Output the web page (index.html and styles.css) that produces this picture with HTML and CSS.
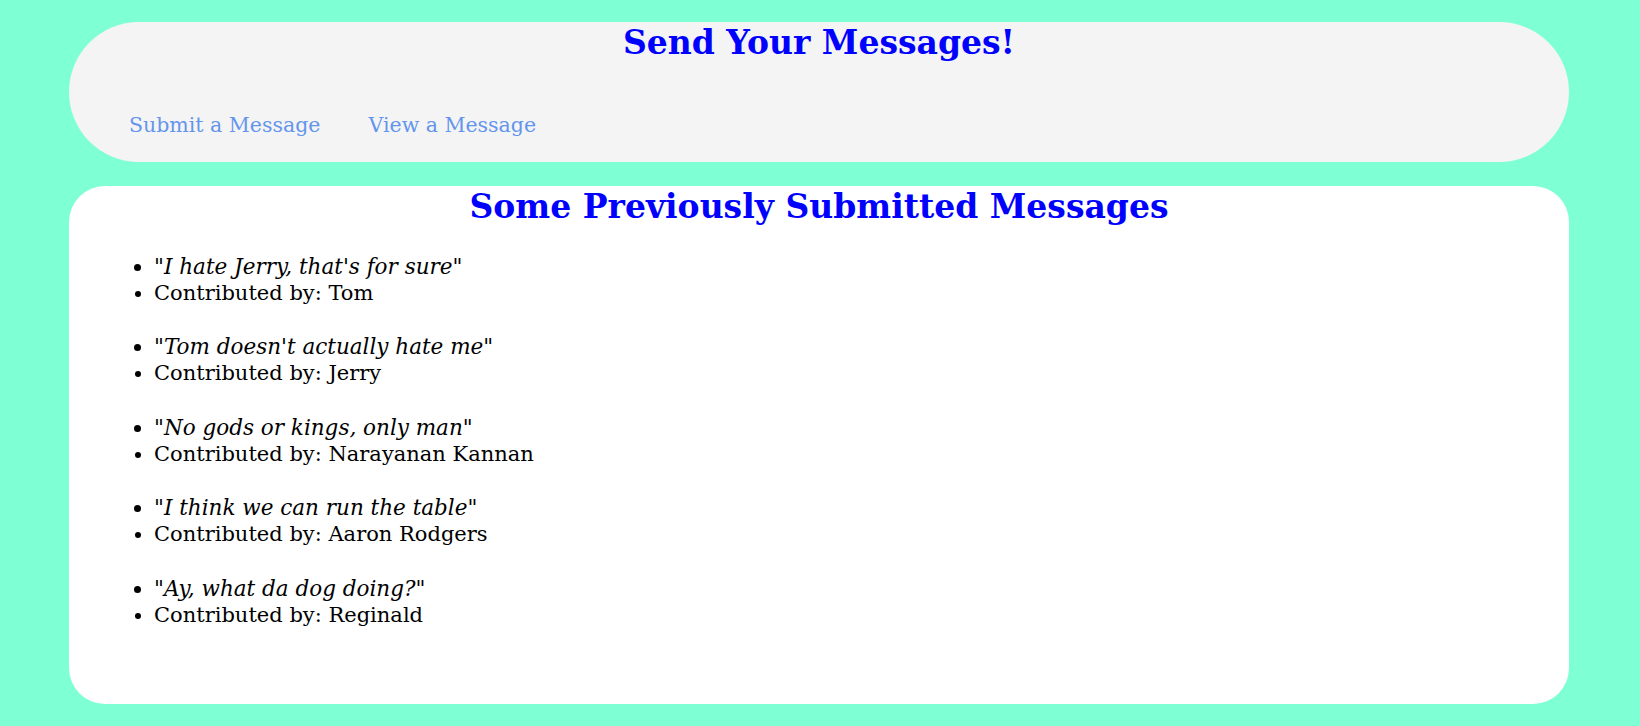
FILE: index.html
```html
<!DOCTYPE html>
<html lang="en">
<head>
<meta charset="utf-8">
<title>Send Your Messages!</title>
<link rel="stylesheet" href="styles.css">
</head>
<body>
<header class="top">
  <h1 class="title">Send Your Messages!</h1>
  <nav class="nav">
    <a class="nav-link" href="#">Submit a Message</a>
    <a class="nav-link" href="#">View a Message</a>
  </nav>
</header>
<main class="panel">
  <h1 class="title">Some Previously Submitted Messages</h1>
  <ul class="msg">
    <li class="quote">"I hate Jerry, that's for sure"</li>
    <li>Contributed by: Tom</li>
  </ul>
  <ul class="msg">
    <li class="quote">"Tom doesn't actually hate me"</li>
    <li>Contributed by: Jerry</li>
  </ul>
  <ul class="msg">
    <li class="quote">"No gods or kings, only man"</li>
    <li>Contributed by: Narayanan Kannan</li>
  </ul>
  <ul class="msg">
    <li class="quote">"I think we can run the table"</li>
    <li>Contributed by: Aaron Rodgers</li>
  </ul>
  <ul class="msg">
    <li class="quote">"Ay, what da dog doing?"</li>
    <li>Contributed by: Reginald</li>
  </ul>
</main>
</body>
</html>
```

FILE: styles.css
```css
html, body {
  margin: 0;
  padding: 0;
}
body {
  background: #7fffd4;
  font-family: "DejaVu Serif", "Liberation Serif", serif;
  padding: 22px 71px 22px 69px;
  display: flex;
  flex-direction: column;
  gap: 24px;
}
.top {
  background: #f4f4f4;
  border-radius: 70px;
  height: 140px;
  box-sizing: border-box;
}
.title {
  margin: 0;
  text-align: center;
  color: #0000ff;
  font-weight: bold;
  font-size: 33px;
  line-height: 41px;
}
.nav {
  display: flex;
  gap: 48px;
  padding: 49px 0 0 60px;
}
.nav-link {
  color: #6495ed;
  text-decoration: none;
  font-size: 20.5px;
  line-height: 27px;
}
.panel {
  background: #ffffff;
  border-radius: 36px;
  height: 518px;
  box-sizing: border-box;
}
.msg {
  margin: 26.5px 0 0 0;
  padding-left: 85px;
  font-size: 21px;
  line-height: 27px;
  color: #000;
}
.msg:first-of-type {
  margin-top: 25.5px;
}
.quote {
  font-style: italic;
  font-size: 21.5px;
}
```
